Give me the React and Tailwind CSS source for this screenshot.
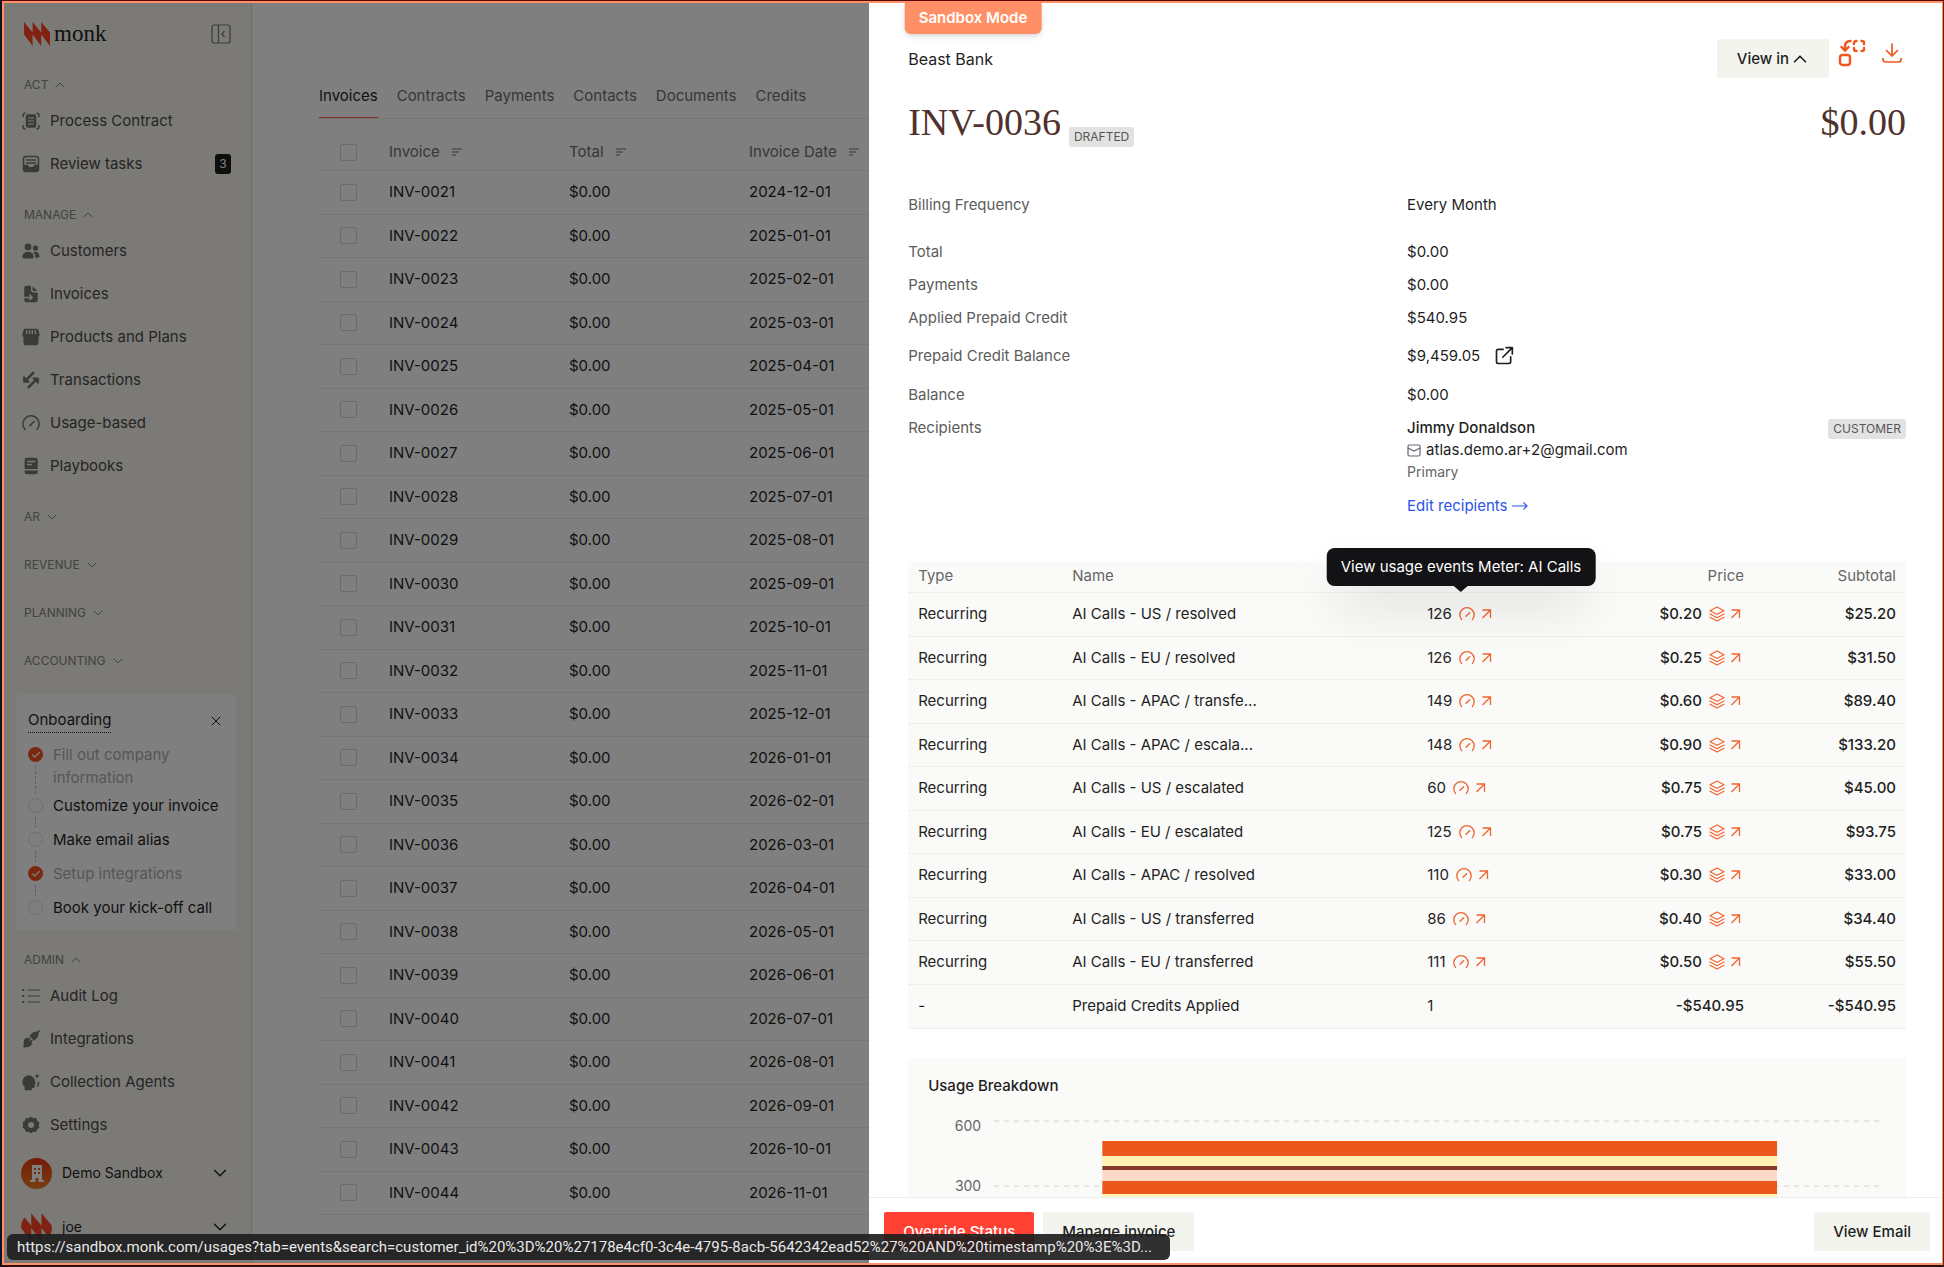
import React from 'react';
import { Check, ChevronDown, ChevronUp, X } from 'lucide-react';

const tabs = ['Invoices', 'Contracts', 'Payments', 'Contacts', 'Documents', 'Credits'];

const invoices = [
  ['INV-0021', '2024-12-01'],
  ['INV-0022', '2025-01-01'],
  ['INV-0023', '2025-02-01'],
  ['INV-0024', '2025-03-01'],
  ['INV-0025', '2025-04-01'],
  ['INV-0026', '2025-05-01'],
  ['INV-0027', '2025-06-01'],
  ['INV-0028', '2025-07-01'],
  ['INV-0029', '2025-08-01'],
  ['INV-0030', '2025-09-01'],
  ['INV-0031', '2025-10-01'],
  ['INV-0032', '2025-11-01'],
  ['INV-0033', '2025-12-01'],
  ['INV-0034', '2026-01-01'],
  ['INV-0035', '2026-02-01'],
  ['INV-0036', '2026-03-01'],
  ['INV-0037', '2026-04-01'],
  ['INV-0038', '2026-05-01'],
  ['INV-0039', '2026-06-01'],
  ['INV-0040', '2026-07-01'],
  ['INV-0041', '2026-08-01'],
  ['INV-0042', '2026-09-01'],
  ['INV-0043', '2026-10-01'],
  ['INV-0044', '2026-11-01'],
];

const lineItems = [
  { name: 'AI Calls - US / resolved', qty: '126', price: '$0.20', subtotal: '$25.20' },
  { name: 'AI Calls - EU / resolved', qty: '126', price: '$0.25', subtotal: '$31.50' },
  { name: 'AI Calls - APAC / transfe...', qty: '149', price: '$0.60', subtotal: '$89.40' },
  { name: 'AI Calls - APAC / escala...', qty: '148', price: '$0.90', subtotal: '$133.20' },
  { name: 'AI Calls - US / escalated', qty: '60', price: '$0.75', subtotal: '$45.00' },
  { name: 'AI Calls - EU / escalated', qty: '125', price: '$0.75', subtotal: '$93.75' },
  { name: 'AI Calls - APAC / resolved', qty: '110', price: '$0.30', subtotal: '$33.00' },
  { name: 'AI Calls - US / transferred', qty: '86', price: '$0.40', subtotal: '$34.40' },
  { name: 'AI Calls - EU / transferred', qty: '111', price: '$0.50', subtotal: '$55.50' },
];

// Stacked usage bar, top to bottom
const usageStack = [
  { y: 31, h: 15, fill: '#ec581c' },
  { y: 46, h: 10, fill: '#fff2b3' },
  { y: 56, h: 4, fill: '#843a2b' },
  { y: 60, h: 11, fill: '#fbd9c9' },
  { y: 71, h: 13, fill: '#ec581c' },
  { y: 84, h: 20, fill: '#fff2b3' },
];

const statusUrl =
  'https://sandbox.monk.com/usages?tab=events&search=customer_id%20%3D%20%27178e4cf0-3c4e-4795-8acb-5642342ead52%27%20AND%20timestamp%20%3E%3D...';

function Icon({ className = 'size-[18px]', children }) {
  return (
    <svg viewBox="0 0 24 24" fill="none" stroke="currentColor" strokeWidth="2" strokeLinecap="round" strokeLinejoin="round" className={`shrink-0 ${className}`} aria-hidden="true">
      {children}
    </svg>
  );
}

const ContractIcon = () => (
  <Icon>
    <path d="M1.5 6V4A2.5 2.5 0 0 1 4 1.500M20 1.500A2.500 2.500 0 0 1 22.500 4v2M22.500 18v2a2.500 2.500 0 0 1-2.500 2.500M4 22.500A2.500 2.500 0 0 1 1.500 20v-2" />
    <rect x="5" y="3" width="14" height="18" rx="3" fill="currentColor" stroke="none" />
    <path d="M8.500 8h7M8.500 12h7M8.500 16h7" stroke="#f6f4ed" strokeWidth="1.600" />
  </Icon>
);

const InboxIcon = () => (
  <Icon>
    <rect x="2" y="2" width="20" height="20" rx="3" />
    <path d="M1.500 13h6l2 3h5l2-3h6v6a3.500 3.500 0 0 1-3.500 3.500H5A3.500 3.500 0 0 1 1.500 19z" fill="currentColor" stroke="none" />
    <path d="M6 6.500h12M6 10.500h12" />
  </Icon>
);

const PeopleIcon = () => (
  <Icon>
    <g fill="currentColor" stroke="none">
      <circle cx="8" cy="6.500" r="4.500" />
      <circle cx="18" cy="8" r="3.500" />
      <path d="M8 13c-4.500 0-7.500 2.800-7.500 6.500C.5 21 1.500 22 3 22h10c1.500 0 2.500-1 2.500-2.500C15.500 15.800 12.500 13 8 13z" />
      <path d="M18 13c-1.300 0-2.400.3-3.300.8 1.900 1.500 3 3.500 3 5.700 0 .5 0 1-.2 1.500H21c1.500 0 2.500-1 2.300-2.300C22.900 15.300 21 13 18 13z" />
    </g>
  </Icon>
);

const InvoiceIcon = () => (
  <Icon>
    <path d="M6 1h6v6a3 3 0 0 0 3 3h6v10a3 3 0 0 1-3 3H6a3 3 0 0 1-3-3V4a3 3 0 0 1 3-3z" fill="currentColor" stroke="none" />
    <path d="M14 1.500 20.500 8H15a1 1 0 0 1-1-1z" fill="currentColor" stroke="none" />
    <path d="M3 16.500h10M10.500 13.500l3 3-3 3" stroke="#f6f4ed" />
  </Icon>
);

const StoreIcon = () => (
  <Icon>
    <path d="M4 1h16a2 2 0 0 1 2 1.500L23.500 9c0 1.500-1 2.500-1.500 3v8a3 3 0 0 1-3 3H5a3 3 0 0 1-3-3v-8c-.5-.5-1.500-1.500-1.500-3L2 2.500A2 2 0 0 1 4 1z" fill="currentColor" stroke="none" />
    <path d="M6.500 3.500 6 7.500M10.200 3.500v4M13.800 3.500v4M17.500 3.500l.5 4" stroke="#f6f4ed" strokeWidth="1.800" />
  </Icon>
);

const TransferIcon = () => (
  <Icon>
    <path d="M15 2.500 7 10.500M9 21.500 17 13.500" strokeWidth="3.500" />
    <path d="M2.500 8v6.500H9zM21.500 16V9.500H15z" fill="currentColor" />
  </Icon>
);

const GaugeIcon = ({ className }) => (
  <Icon className={className}>
    <path d="M4 20.500a10.800 10.800 0 1 1 16 0" />
    <path d="m10.500 15.500 5.500-5.500" />
  </Icon>
);

const BookIcon = () => (
  <Icon>
    <path d="M6.500 1H18a3 3 0 0 1 3 3v12H3.500V4a3 3 0 0 1 3-3zM3.500 18H21v2a3 3 0 0 1-3 3H6.500a3 3 0 0 1-3-3z" fill="currentColor" stroke="none" />
    <path d="M7.500 6H17M7.500 10h5" stroke="#f6f4ed" strokeWidth="1.800" />
  </Icon>
);

const ListIcon = () => (
  <Icon>
    <path d="M8 4h15M8 12h15M8 20h15" strokeWidth="1.600" />
    <path d="M1.500 4h.01M1.500 12h.01M1.500 20h.01" strokeWidth="3" />
  </Icon>
);

const PlugIcon = () => (
  <Icon>
    <path d="m11.500 6 4-3.500L22 2l-.5 6.500-3.500 4-2 1.500-6-6z" fill="currentColor" stroke="none" />
    <path d="m3 12.500 3-2.500 8 8-2.500 3-4 2-2-.5-2.500 1-1.500-1.500 1-2.500-.5-2z" fill="currentColor" stroke="none" />
    <path d="m22.500 1.500-3 3M10 11l-2 2M13 14l-2 2" strokeWidth="2.500" />
  </Icon>
);

const AgentIcon = () => (
  <Icon>
    <path d="M9.500 3A9 9 0 0 0 .5 12c0 3 1.200 5 3 6.500V23h9.500v-3h2a2 2 0 0 0 2-2v-3c1.500-.5 1-2 .5-3A9 9 0 0 0 9.500 3z" fill="currentColor" stroke="none" />
    <path d="m20 0 1 3 3 1-3 1-1 3-1-3-3-1 3-1z" fill="currentColor" stroke="none" />
    <path d="M22 12.500c.2 2-.2 3.500-1.200 5" />
  </Icon>
);

const GearIcon = () => (
  <Icon>
    <path fillRule="evenodd" d="M12 .8 15 3l3.800-.2 1.400 3.500 3 2.300L22.400 12l.8 3.400-3 2.300-1.400 3.500L15 21l-3 2.200L9 21l-3.800.2-1.400-3.500-3-2.300L1.600 12 .8 8.600l3-2.300L5.200 2.800 9 3zM12 8a4 4 0 1 0 0 8 4 4 0 0 0 0-8z" fill="currentColor" stroke="none" />
  </Icon>
);

const StackIcon = () => (
  <Icon className="size-4">
    <path d="M12 1.500 22.500 7 12 12.500 1.500 7zM1.500 12 12 17.500 22.500 12M1.500 17 12 22.500 22.500 17" strokeWidth="1.800" />
  </Icon>
);

const ArrowIcon = () => (
  <svg viewBox="0 0 14 14" className="size-[14px] shrink-0" fill="none" stroke="currentColor" strokeWidth="1.300" aria-hidden="true">
    <path d="M1.500 3h8v8M9.500 3l-8 8" />
  </svg>
);

const SortIcon = () => (
  <svg viewBox="0 0 10 8" className="h-2 w-[10px]" stroke="currentColor" aria-hidden="true">
    <path d="M0 1h10M0 4h7M0 7h4" />
  </svg>
);

function MonkMark({ className }) {
  return (
    <svg viewBox="0 0 26 24" className={className} fill="#ff4524" aria-hidden="true">
      <path d="M0 0l8.600 10.500V24L0 12.500zM8.600 0l8.600 10.500V24L8.600 12.500zM17.200 0l8.800 10.500V24l-8.800-11.500z" />
    </svg>
  );
}

const manageLinks = [
  ['Customers', PeopleIcon],
  ['Invoices', InvoiceIcon],
  ['Products and Plans', StoreIcon],
  ['Transactions', TransferIcon],
  ['Usage-based', GaugeIcon],
  ['Playbooks', BookIcon],
];

const adminLinks = [
  ['Audit Log', ListIcon],
  ['Integrations', PlugIcon],
  ['Collection Agents', AgentIcon],
  ['Settings', GearIcon],
];

const steps = [
  { label: 'Fill out company information', done: true },
  { label: 'Customize your invoice', done: false },
  { label: 'Make email alias', done: false },
  { label: 'Setup integrations', done: true },
  { label: 'Book your kick-off call', done: false },
];

function Section({ title, open = false, children }) {
  const Chevron = open ? ChevronUp : ChevronDown;
  return (
    <div className={open ? '' : 'pb-1'}>
      <button type="button" className="flex h-7 items-center gap-1 pl-5 text-xs text-[#85847f]">
        {title}
        <Chevron className="size-4" strokeWidth={1.5} />
      </button>
      {children}
    </div>
  );
}

function NavLink({ label, icon: NavIcon, badge }) {
  return (
    <a href="#" className="flex h-[43px] items-center gap-[10px] pr-5 pl-[18px] text-[#4b4b48]">
      <span className="text-[#75746f]"><NavIcon /></span>
      <span className="flex-1">{label}</span>
      {badge && (
        <span className="flex h-5 w-4 items-center justify-center rounded-[3px] bg-[#1d1d1d] text-xs text-white">{badge}</span>
      )}
    </a>
  );
}

function Onboarding() {
  return (
    <div className="mr-[15px] ml-3 rounded-[2px] bg-white px-3 pt-[13px]">
      <div className="mb-[10px] flex items-center justify-between">
        <a href="#" className="border-b border-dotted border-[#1f1f1f] leading-6 text-[#1f1f1f]">Onboarding</a>
        <button type="button" aria-label="Dismiss" className="text-[#1f1f1f]"><X className="size-4" strokeWidth={1.5} /></button>
      </div>
      <ul>
        {steps.map((step, i) => (
          <li key={step.label} className="flex min-h-[34px] gap-[10px]">
            <div className="flex w-[15px] flex-col items-center pt-1">
              {step.done ? (
                <span className="flex size-[15px] items-center justify-center rounded-full bg-[#f4511e] text-white">
                  <Check className="size-[10px]" strokeWidth={3} />
                </span>
              ) : (
                <span className="size-[15px] rounded-full border border-[#dcdcd6]" />
              )}
              {i < steps.length - 1 && <span className="mt-1 flex-1 border-l border-dashed border-[#c4c4c0]" />}
            </div>
            <span className={`flex-1 pb-[5px] leading-[23px] ${step.done ? 'text-[#acacac]' : 'text-[#1f1f1f]'}`}>{step.label}</span>
          </li>
        ))}
      </ul>
    </div>
  );
}

function Sidebar() {
  return (
    <aside className="flex w-62 shrink-0 flex-col gap-4 border-r border-[#dddde2] bg-[#f6f4ed]">
      <div className="flex h-[52px] shrink-0 items-end justify-between px-5 pb-[3px]">
        <a href="#" className="flex items-center gap-1">
          <MonkMark className="h-6 w-[26px]" />
          <span className="font-['Liberation_Serif',serif] text-[23px] leading-9 text-[#1f1f1f]">monk</span>
        </a>
        <button type="button" aria-label="Collapse sidebar" className="mb-2 text-[#75746f]">
          <svg viewBox="0 0 20 20" className="size-5" fill="none" stroke="currentColor" strokeWidth="1.200">
            <rect x="1" y="1" width="18" height="18" rx="2" />
            <path d="M7.500 1v18M13.500 7l-2.500 3 2.500 3" />
          </svg>
        </button>
      </div>
      <Section title="ACT" open>
        <NavLink label="Process Contract" icon={ContractIcon} />
        <NavLink label="Review tasks" icon={InboxIcon} badge="3" />
      </Section>
      <Section title="MANAGE" open>
        {manageLinks.map(([label, icon]) => <NavLink key={label} label={label} icon={icon} />)}
      </Section>
      <Section title="AR" />
      <Section title="REVENUE" />
      <Section title="PLANNING" />
      <Section title="ACCOUNTING" />
      <Onboarding />
      <div>
        <Section title="ADMIN" open>
          {adminLinks.map(([label, icon]) => <NavLink key={label} label={label} icon={icon} />)}
        </Section>
        <button type="button" className="flex h-[54px] w-full items-center gap-[10px] pr-5 pl-[17px] text-sm text-[#1f1f1f]">
          <span className="flex size-[31px] items-center justify-center rounded-full bg-linear-to-b from-[#e63312] to-[#f07a20] text-white">
            <svg viewBox="0 0 14 17" className="h-[17px] w-[14px]" fill="currentColor">
              <path fillRule="evenodd" d="M2 0h10v15h2v2H8.500v-4h-3v4H0v-2h2zM4 3v2h2V3zm4 0v2h2V3zM4 7v2h2V7zm4 0v2h2V7z" />
            </svg>
          </span>
          <span className="flex-1 text-left">Demo Sandbox</span>
          <ChevronDown className="size-[22px]" strokeWidth={1.5} />
        </button>
        <button type="button" className="flex h-[54px] w-full items-center gap-[10px] pr-5 pl-[17px] text-sm text-[#1f1f1f]">
          <span className="size-[31px] overflow-hidden rounded-full"><MonkMark className="size-[31px]" /></span>
          <span className="flex-1 text-left">joe</span>
          <ChevronDown className="size-[22px]" strokeWidth={1.5} />
        </button>
      </div>
    </aside>
  );
}

function Checkbox({ label }) {
  return (
    <input type="checkbox" aria-label={label} className="block size-[17px] appearance-none rounded-[2px] border border-[#d6d4cd] bg-white" />
  );
}

function InvoiceList() {
  return (
    <main className="min-w-0 flex-1 overflow-hidden bg-white pt-[81px] pl-[67px]">
      <nav className="flex gap-[19px] border-b border-[#ededed] text-[#6f6f6f]">
        {tabs.map((tab, i) => (
          <a key={tab} href="#" className={`h-[34px] leading-6 ${i === 0 ? 'text-[#1f1f1f] shadow-[inset_0_-1px_0_#ff6347]' : ''}`}>{tab}</a>
        ))}
      </nav>
      <table className="mt-4 w-full table-fixed text-left">
        <thead>
          <tr className="h-[35px] border-b border-[#ededed] text-[#6f6f6f]">
            <th className="w-[70px] pl-[21px]"><Checkbox label="Select all invoices" /></th>
            {['Invoice', 'Total', 'Invoice Date'].map((col) => (
              <th key={col} className="w-[180px] font-normal">
                <span className="flex items-center gap-3">{col}<SortIcon /></span>
              </th>
            ))}
            <th aria-label="Status" />
          </tr>
        </thead>
        <tbody className="text-[#1f1f1f]">
          {invoices.map(([id, date]) => (
            <tr key={id} className="border-b border-[#ededed] odd:h-11 even:h-[43px]">
              <td className="pl-[21px]"><Checkbox label={`Select ${id}`} /></td>
              <td>{id}</td>
              <td>$0.00</td>
              <td>{date}</td>
              <td />
            </tr>
          ))}
        </tbody>
      </table>
    </main>
  );
}

function DetailRow({ label, className = 'h-[33px]', children }) {
  return (
    <div className={`grid grid-cols-2 items-center ${className}`}>
      <dt className="text-[#5c5c5c]">{label}</dt>
      <dd>{children}</dd>
    </div>
  );
}

function Badge({ children }) {
  return (
    <span className="flex h-5 items-center rounded-[3px] bg-[#e2e2e2] px-[5px] text-xs font-normal text-[#555]">{children}</span>
  );
}

function Tooltip({ children }) {
  return (
    <span role="tooltip" className="absolute bottom-full left-1/2 mb-4 -translate-x-1/2 rounded-lg bg-[#131316] px-[14px] py-[7px] whitespace-nowrap text-white shadow-2xl">
      {children}
      <span className="absolute top-full left-1/2 -translate-x-1/2 border-x-[7px] border-t-[6px] border-x-transparent border-t-[#131316]" />
    </span>
  );
}

function LineItems() {
  return (
    <table className="mt-11 w-full table-fixed rounded-[2px] bg-[#fafaf8] text-left">
      <thead>
        <tr className="h-[31px] border-b border-[#efefec] text-[#666]">
          <th className="w-[154px] pl-[10px] font-normal">Type</th>
          <th className="w-[355px] pl-[10px] font-normal">Name</th>
          <th className="pl-[10px]" aria-label="Quantity" />
          <th className="w-[172px] pr-[10px] text-right font-normal">Price</th>
          <th className="w-[152px] pr-[10px] text-right font-normal">Subtotal</th>
        </tr>
      </thead>
      <tbody>
        {lineItems.map((item, i) => (
          <tr key={item.name} className="border-b border-[#efefec] odd:h-11 even:h-[43px]">
            <td className="pl-[10px]">Recurring</td>
            <td className="pl-[10px]">{item.name}</td>
            <td className="pl-[10px]">
              <a href="#" className="relative inline-flex items-center gap-[7px]">
                {item.qty}
                <span className="flex items-center gap-[6px] text-[#f0642f]">
                  <GaugeIcon className="size-4" />
                  <ArrowIcon />
                </span>
                {i === 0 && <Tooltip>View usage events Meter: AI Calls</Tooltip>}
              </a>
            </td>
            <td className="pr-[10px]">
              <a href="#" className="flex items-center justify-end gap-[7px] font-medium">
                {item.price}
                <span className="flex items-center gap-[5px] text-[#f0642f]">
                  <StackIcon />
                  <ArrowIcon />
                </span>
              </a>
            </td>
            <td className="pr-[10px] text-right font-medium">{item.subtotal}</td>
          </tr>
        ))}
        <tr className="h-11 border-b border-[#efefec]">
          <td className="pl-[10px]">-</td>
          <td className="pl-[10px]">Prepaid Credits Applied</td>
          <td className="pl-[10px]">1</td>
          <td className="pr-[10px] text-right font-medium">-$540.95</td>
          <td className="pr-[10px] text-right font-medium">-$540.95</td>
        </tr>
      </tbody>
    </table>
  );
}

function UsageBreakdown() {
  return (
    <section className="mt-[29px] h-90 rounded-[2px] bg-[#fafaf9] pt-4 pr-6 pl-5">
      <h2 className="leading-6 font-medium">Usage Breakdown</h2>
      <div className="mt-3 flex gap-[13px]">
        <div className="flex w-[53px] flex-col gap-9 pt-1 text-right text-sm leading-6 text-[#666]">
          <span>600</span>
          <span>300</span>
        </div>
        <svg className="h-60 flex-1" aria-label="Usage by meter">
          <path d="M0 11h2000M0 76h2000" stroke="#e8e8e0" strokeWidth="2" strokeDasharray="5 5" />
          {usageStack.map((bar) => (
            <rect key={bar.y} x="12.200%" y={bar.y} width="76%" height={bar.h} fill={bar.fill} />
          ))}
        </svg>
      </div>
    </section>
  );
}

function InvoiceDrawer() {
  return (
    <div role="dialog" aria-label="INV-0036" className="absolute inset-y-0 right-0 flex w-31/56 flex-col bg-white text-[#1f1f1f]">
      <div className="min-h-0 flex-1 overflow-hidden pt-9 pr-9 pl-[39px]">
        <header className="flex items-start">
          <span className="flex-1 pt-px text-base leading-[39px]">Beast Bank</span>
          <button type="button" className="flex h-[39px] items-center rounded-[2px] bg-[#f4f4ee] pr-[18px] pl-5 font-medium">
            View in
            <ChevronUp className="size-[22px]" strokeWidth={1.8} />
          </button>
          <button type="button" aria-label="Replace invoice" className="ml-[9px] text-[#f0561f]">
            <svg viewBox="0 0 28 28" className="size-7" fill="none" stroke="currentColor" strokeWidth="2.400" strokeLinecap="round" strokeLinejoin="round">
              <rect x="2" y="16" width="10" height="10" rx="2.500" />
              <path d="M12.500 2C9 2.200 7 4 7 7.500V11M3.500 8 7 11.800 10.500 8" />
              <path d="M16 5V4a2 2 0 0 1 2-2h.5M23.500 2h.5a2 2 0 0 1 2 2v1M26 9v1a2 2 0 0 1-2 2h-.5M18.500 12H18a2 2 0 0 1-2-2V9" />
            </svg>
          </button>
          <button type="button" aria-label="Download" className="ml-3 flex size-7 items-center justify-center text-[#f0561f]">
            <svg viewBox="0 0 20 20" className="size-5" fill="none" stroke="currentColor" strokeWidth="1.700" strokeLinecap="round" strokeLinejoin="round">
              <path d="M10 1v12M4.500 7.500 10 13l5.500-5.500M1 15.500v1A2.500 2.500 0 0 0 3.500 19h13a2.500 2.500 0 0 0 2.500-2.500v-1" />
            </svg>
          </button>
        </header>
        <div className="flex items-end gap-2 pt-[19px]">
          <h1 className="font-['Liberation_Serif',serif] text-[38px] leading-[49px] text-[#4f322b]">INV-0036</h1>
          <Badge>DRAFTED</Badge>
          <span className="flex-1 text-right font-['Liberation_Serif',serif] text-[38px] leading-[49px] text-[#4f322b]">$0.00</span>
        </div>
        <dl className="pt-[41px]">
          <DetailRow label="Billing Frequency" className="mb-[14px] h-[33px]">Every Month</DetailRow>
          <DetailRow label="Total">$0.00</DetailRow>
          <DetailRow label="Payments">$0.00</DetailRow>
          <DetailRow label="Applied Prepaid Credit">$540.95</DetailRow>
          <DetailRow label="Prepaid Credit Balance" className="h-11">
            <span className="flex items-center gap-[14px]">
              $9,459.05
              <a href="#" aria-label="Open credit balance">
                <Icon className="size-5">
                  <path d="M11 4H5a2 2 0 0 0-2 2v13a2 2 0 0 0 2 2h13a2 2 0 0 0 2-2v-6M14.500 2H22v7.500M22 2 10.500 13.500" />
                </Icon>
              </a>
            </span>
          </DetailRow>
          <DetailRow label="Balance">$0.00</DetailRow>
          <div className="grid grid-cols-2 pt-[6px] leading-[22px]">
            <dt className="text-[#5c5c5c]">Recipients</dt>
            <dd>
              <div className="flex items-end justify-between font-medium">Jimmy Donaldson<Badge>CUSTOMER</Badge></div>
              <div className="flex items-center gap-[5px]">
                <svg viewBox="0 0 14 14" className="size-[14px]" fill="none" stroke="#667" strokeWidth="1.200">
                  <rect x="1" y="2" width="12" height="11" rx="1.500" />
                  <path d="m1 5 6 3 6-3" />
                </svg>
                atlas.demo.ar+2@gmail.com
              </div>
              <div className="text-sm leading-[22px] text-[#666]">Primary</div>
              <a href="#" className="mt-3 flex items-center gap-1 text-[#2b54ea]">
                Edit recipients
                <svg viewBox="0 0 16 10" className="h-[10px] w-4" fill="none" stroke="currentColor" strokeWidth="1.200"><path d="M0 5h15M11.500 1.500 15 5l-3.500 3.500" /></svg>
              </a>
            </dd>
          </div>
        </dl>
        <LineItems />
        <UsageBreakdown />
      </div>
      <footer className="flex h-[66px] items-start gap-[9px] border-t border-[#ededed] bg-white pt-[14px] pr-3 pl-[15px] font-medium">
        <button type="button" className="h-[39px] rounded-[2px] bg-[#ff4033] px-[19px] text-white">Override Status</button>
        <button type="button" className="h-[39px] rounded-[2px] bg-[#f4f4ee] px-[19px]">Manage invoice</button>
        <button type="button" className="ml-auto h-[39px] rounded-[2px] bg-[#f4f4ee] px-[19px]">View Email</button>
      </footer>
    </div>
  );
}

export default function App() {
  return (
    <div className="h-screen overflow-hidden border-t border-r border-b-2 border-l-2 border-t-[#5c0505] border-r-[#6b1a0c] border-b-[#2a100c] border-l-[#0c1422] font-['Inter',sans-serif] text-[15px] leading-6">
      <div className="relative flex h-full overflow-hidden border-2 border-r border-[#ff8f66]">
        <Sidebar />
        <InvoiceList />
        <div className="absolute inset-0 bg-black/50" />
        <InvoiceDrawer />
        <div className="absolute top-0 left-1/2 -translate-x-1/2 rounded-b-md bg-[#ff8f66] px-[14px] pb-[2px] leading-[29px] font-semibold text-white shadow-md">Sandbox Mode</div>
        <div className="absolute bottom-[3px] left-[3px] h-[26px] rounded-md bg-[#1e1e20]/92 pr-[18px] pl-[10px] font-['Roboto',sans-serif] leading-[26px] whitespace-nowrap text-[#e8e8e8]">{statusUrl}</div>
      </div>
    </div>
  );
}
